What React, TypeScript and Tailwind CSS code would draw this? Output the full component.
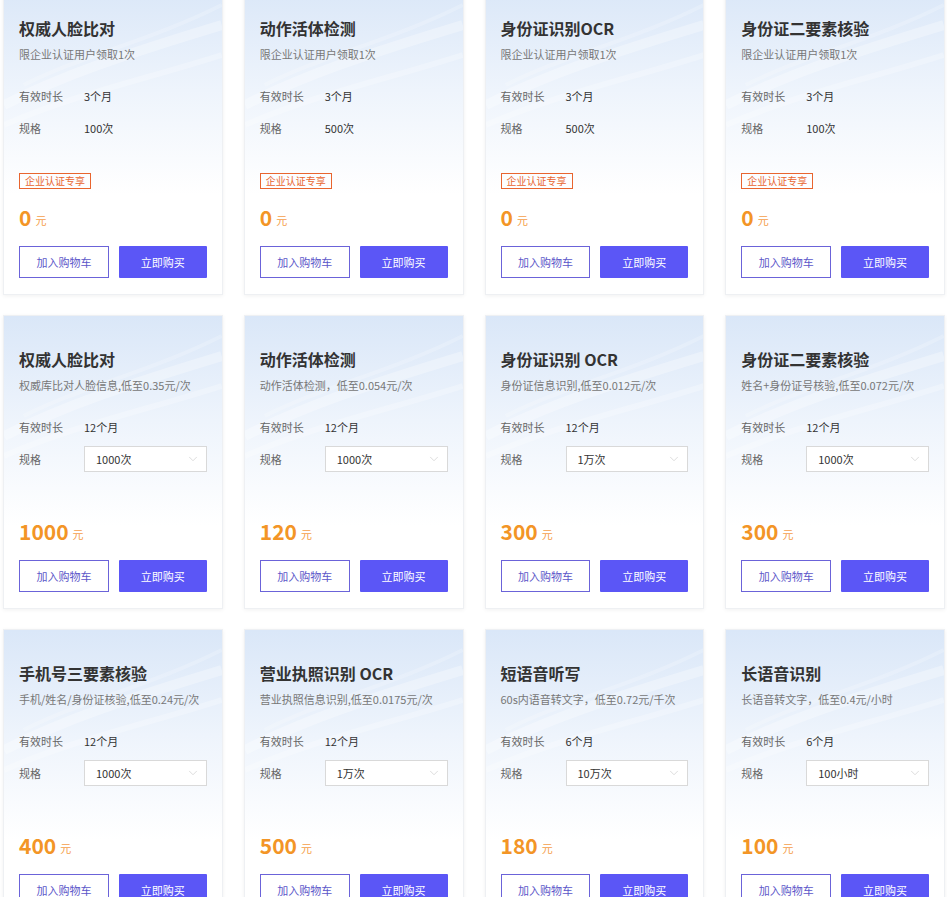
import { ChevronDown } from "lucide-react";

type Item = {
  title: string;
  desc: string;
  period: string;
  spec: string;
  price: string;
  free?: boolean;
};

const items: Item[] = [
  { title: "权威人脸比对", desc: "限企业认证用户领取1次", period: "3个月", spec: "100次", price: "0", free: true },
  { title: "动作活体检测", desc: "限企业认证用户领取1次", period: "3个月", spec: "500次", price: "0", free: true },
  { title: "身份证识别OCR", desc: "限企业认证用户领取1次", period: "3个月", spec: "500次", price: "0", free: true },
  { title: "身份证二要素核验", desc: "限企业认证用户领取1次", period: "3个月", spec: "100次", price: "0", free: true },
  { title: "权威人脸比对", desc: "权威库比对人脸信息,低至0.35元/次", period: "12个月", spec: "1000次", price: "1000" },
  { title: "动作活体检测", desc: "动作活体检测，低至0.054元/次", period: "12个月", spec: "1000次", price: "120" },
  { title: "身份证识别 OCR", desc: "身份证信息识别,低至0.012元/次", period: "12个月", spec: "1万次", price: "300" },
  { title: "身份证二要素核验", desc: "姓名+身份证号核验,低至0.072元/次", period: "12个月", spec: "1000次", price: "300" },
  { title: "手机号三要素核验", desc: "手机/姓名/身份证核验,低至0.24元/次", period: "12个月", spec: "1000次", price: "400" },
  { title: "营业执照识别 OCR", desc: "营业执照信息识别,低至0.0175元/次", period: "12个月", spec: "1万次", price: "500" },
  { title: "短语音听写", desc: "60s内语音转文字，低至0.72元/千次", period: "6个月", spec: "10万次", price: "180" },
  { title: "长语音识别", desc: "长语音转文字，低至0.4元/小时", period: "6个月", spec: "100小时", price: "100" },
];

// faint light streaks in the card header background
const Waves = () => (
  <svg
    className="absolute inset-x-0 top-0 w-full h-[200px] pointer-events-none"
    viewBox="0 0 220 200"
    preserveAspectRatio="none"
  >
    <path d="M0 120 C 60 90, 120 70, 220 40" stroke="#ffffff" strokeOpacity="0.3" strokeWidth="10" fill="none" />
    <path d="M0 140 C 70 110, 140 95, 220 70" stroke="#ffffff" strokeOpacity="0.25" strokeWidth="6" fill="none" />
    <path d="M20 100 C 80 70, 150 55, 220 20" stroke="#ffffff" strokeOpacity="0.2" strokeWidth="4" fill="none" />
  </svg>
);

const Price = ({ value }: { value: string }) => (
  <div className="h-[28px] flex items-end text-[#f39526]">
    <span className="text-[21px] leading-[28px] font-bold">{value}</span>
    <span className="ml-[4px] mb-[3px] text-[11px] leading-[16px] text-[#f5a04a]">元</span>
  </div>
);

const ProductCard = ({ item }: { item: Item }) => (
  <div className="relative overflow-hidden bg-white border border-[#eef0f3] shadow-[0_1px_4px_rgba(0,0,0,0.06)]">
    <div className="absolute inset-x-0 top-0 h-[210px] bg-gradient-to-b from-[#dae7f8] via-[#eef4fc] to-white" />
    <Waves />
    <div className="relative flex flex-col px-[15px] pt-[31px] pb-[16px]">
      {/* Title */}
      <div className="text-[16px] leading-[24px] font-bold text-[#333]">{item.title}</div>
      <div className="mt-[5px] text-[11px] leading-[18px] text-[#777] whitespace-nowrap">{item.desc}</div>

      {/* Info */}
      <div className="mt-[24px] flex items-center h-[18px] text-[11px]">
        <span className="w-[65px] text-[#666]">有效时长</span>
        <span className="text-[#333]">{item.period}</span>
      </div>
      <div className="mt-[10px] flex items-center h-[26px] text-[11px]">
        <span className="w-[65px] text-[#666]">规格</span>
        {item.free ? (
          <span className="text-[#333]">{item.spec}</span>
        ) : (
          <div className="flex-1 h-[26px] flex items-center justify-between border border-[#d9d9d9] bg-white pl-[11px] pr-[6px] text-[#333]">
            <span>{item.spec}</span>
            <ChevronDown size={14} strokeWidth={1.2} className="text-[#cfcfcf]" />
          </div>
        )}
      </div>

      {/* Price */}
      {item.free ? (
        <>
          <div className="mt-[32px] self-start h-[16px] flex items-center px-[5px] border border-[#e8652f] text-[10px] leading-none text-[#e8652f]">
            企业认证专享
          </div>
          <div className="mt-[14px]">
            <Price value={item.price} />
          </div>
        </>
      ) : (
        <div className="mt-[45px]">
          <Price value={item.price} />
        </div>
      )}

      {/* Actions */}
      <div className="mt-[15px] flex gap-[10px]">
        <button className="flex-1 h-[32px] border border-[#6b63d9] bg-white text-[11px] text-[#5c57c9]">
          加入购物车
        </button>
        <button className="flex-1 h-[32px] bg-[#5b56f6] text-[11px] text-white rounded-[1px]">
          立即购买
        </button>
      </div>
    </div>
  </div>
);

export default function App() {
  return (
    <div className="min-h-screen bg-white font-['Microsoft_YaHei','Noto_Sans_CJK_SC','Noto_Sans',sans-serif]">
      <div className="-mt-[16px] pl-[3px] pr-[2px] grid grid-cols-4 gap-x-[21px] gap-y-[20px]">
        {items.map((item, i) => (
          <ProductCard key={i} item={item} />
        ))}
      </div>
    </div>
  );
}
